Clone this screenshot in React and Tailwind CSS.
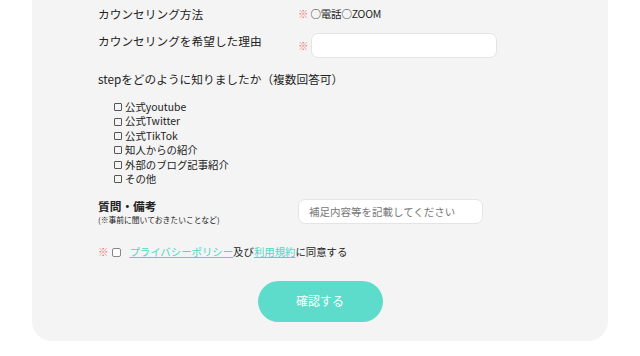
const font = { fontFamily: '"Noto Sans CJK JP", "Noto Sans", sans-serif' };

const sources = ["公式youtube", "公式Twitter", "公式TikTok", "知人からの紹介", "外部のブログ記事紹介", "その他"];

const Box = () => (
  <span className="inline-block w-[8px] h-[8px] border border-[#555] rounded-[1px] mr-[3px]" />
);

export default function App() {
  return (
    <div className="bg-white w-[640px] h-[356px] overflow-hidden text-[#222]" style={font}>
      <div className="mx-[32px] h-[341px] bg-[#f4f4f4] rounded-b-[20px] pl-[66px] pt-[4px] text-[11.7px]">
        <div className="flex items-center h-[20px]">
          <div className="w-[200px]">カウンセリング方法</div>
          <span className="text-[#f26d6d] text-[10.5px] mr-[2px]">※</span>
          <span className="text-[10.5px] tracking-[-0.2px]">○電話○ZOOM</span>
        </div>

        <div className="flex mt-[9px]">
          <div className="w-[200px] leading-[16px]">カウンセリングを希望した理由</div>
          <div className="flex items-center">
            <span className="text-[#f26d6d] text-[10.5px] mr-[2px]">※</span>
            <div className="w-[186px] h-[25px] bg-white border border-[#e4e4e4] rounded-[7px]" />
          </div>
        </div>

        <div className="mt-[12px] leading-[18px]">stepをどのように知りましたか（複数回答可）</div>

        <div className="mt-[12px] pl-[16px] text-[10.4px] leading-[14.4px]">
          {sources.map((s) => (
            <div key={s} className="flex items-center h-[14.4px]">
              <Box />
              {s}
            </div>
          ))}
        </div>

        <div className="flex items-center mt-[12px]">
          <div className="w-[200px]">
            <div className="font-bold leading-[16px]">質問・備考</div>
            <div className="text-[7.8px] leading-[11px]">(※事前に聞いておきたいことなど)</div>
          </div>
          <div className="w-[185px] h-[25px] bg-white border border-[#e4e4e4] rounded-[7px] flex items-center px-[10px] text-[10.5px] text-[#777]">
            補足内容等を記載してください
          </div>
        </div>

        <div className="flex items-center mt-[19px] text-[10.4px]">
          <span className="text-[#f26d6d] mr-[4px]">※</span>
          <span className="inline-block w-[9px] h-[9px] border border-[#888] rounded-[2px] bg-white mr-[8px]" />
          <a className="text-[#4fd6c4] underline">プライバシーポリシー</a>
          <span>及び</span>
          <a className="text-[#4fd6c4] underline">利用規約</a>
          <span>に同意する</span>
        </div>

        <div className="flex justify-center mt-[21px] pr-[66px]">
          <button className="w-[125px] h-[41px] rounded-full bg-[#5ddccb] text-white text-[12px]">確認する</button>
        </div>
      </div>
    </div>
  );
}
